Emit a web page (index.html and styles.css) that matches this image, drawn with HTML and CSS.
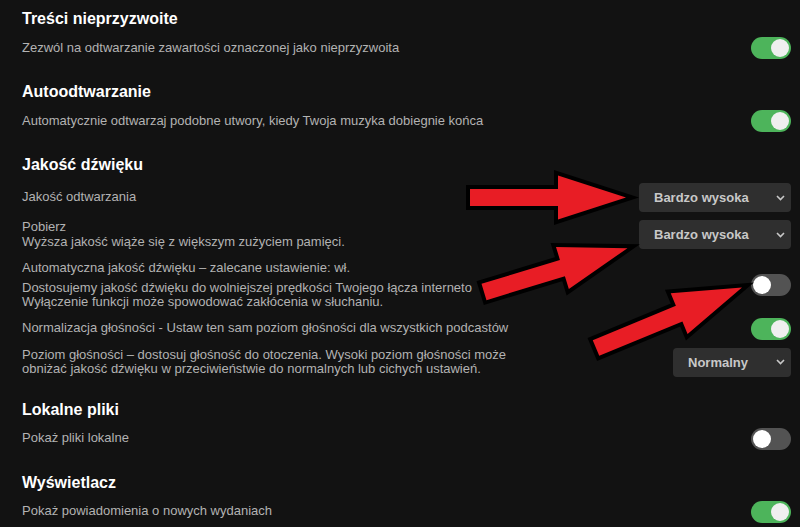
FILE: index.html
```html
<!DOCTYPE html>
<html lang="pl">
<head>
<meta charset="utf-8">
<link rel="stylesheet" href="styles.css">
</head>
<body>
<div class="page">
  <section class="section">
    <h2 class="heading">Treści nieprzyzwoite</h2>
    <div class="row">
      <div class="label">Zezwól na odtwarzanie zawartości oznaczonej jako nieprzyzwoita</div>
      <span class="toggle on"></span>
    </div>
  </section>

  <section class="section">
    <h2 class="heading">Autoodtwarzanie</h2>
    <div class="row">
      <div class="label">Automatycznie odtwarzaj podobne utwory, kiedy Twoja muzyka dobiegnie końca</div>
      <span class="toggle on"></span>
    </div>
  </section>

  <section class="section">
    <h2 class="heading">Jakość dźwięku</h2>
    <div class="row">
      <div class="label">Jakość odtwarzania</div>
      <div class="select wide"><span>Bardzo wysoka</span><svg class="chev" width="9" height="6" viewBox="0 0 9 6"><path d="M1 1l3.5 3.5L8 1" fill="none" stroke="#c8c8c8" stroke-width="1.6"/></svg></div>
    </div>
    <div class="row">
      <div class="label">Pobierz<br>Wyższa jakość wiąże się z większym zużyciem pamięci.</div>
      <div class="select wide"><span>Bardzo wysoka</span><svg class="chev" width="9" height="6" viewBox="0 0 9 6"><path d="M1 1l3.5 3.5L8 1" fill="none" stroke="#c8c8c8" stroke-width="1.6"/></svg></div>
    </div>
    <div class="row auto">
      <div class="label">
        <div>Automatyczna jakość dźwięku – zalecane ustawienie: wł.</div>
        <div class="desc">Dostosujemy jakość dźwięku do wolniejszej prędkości Twojego łącza interneto<br>Wyłączenie funkcji może spowodować zakłócenia w słuchaniu.</div>
      </div>
      <span class="toggle"></span>
    </div>
    <div class="row">
      <div class="label">Normalizacja głośności - Ustaw ten sam poziom głośności dla wszystkich podcastów</div>
      <span class="toggle on"></span>
    </div>
    <div class="row">
      <div class="label">Poziom głośności – dostosuj głośność do otoczenia. Wysoki poziom głośności może<br>obniżać jakość dźwięku w przeciwieństwie do normalnych lub cichych ustawień.</div>
      <div class="select narrow"><span>Normalny</span><svg class="chev" width="9" height="6" viewBox="0 0 9 6"><path d="M1 1l3.5 3.5L8 1" fill="none" stroke="#c8c8c8" stroke-width="1.6"/></svg></div>
    </div>
  </section>

  <section class="section">
    <h2 class="heading">Lokalne pliki</h2>
    <div class="row">
      <div class="label">Pokaż pliki lokalne</div>
      <span class="toggle"></span>
    </div>
  </section>

  <section class="section">
    <h2 class="heading">Wyświetlacz</h2>
    <div class="row">
      <div class="label">Pokaż powiadomienia o nowych wydaniach</div>
      <span class="toggle on"></span>
    </div>
  </section>

  <svg class="arrows" width="800" height="527" viewBox="0 0 800 527">
    <g class="arrow" transform="translate(470 197.5)">
      <polygon points="0,-8.5 88,-8.5 88,-22 156,0 88,22 88,8.5 0,8.5"/>
    </g>
    <g class="arrow" transform="translate(484 292) rotate(-17)">
      <polygon points="0,-8.5 82,-8.5 82,-22 150,0 82,22 82,8.5 0,8.5"/>
    </g>
    <g class="arrow" transform="translate(596 348) rotate(-22.5)">
      <polygon points="0,-8.5 90,-8.5 90,-22 158,0 90,22 90,8.5 0,8.5"/>
    </g>
  </svg>
</div>
</body>
</html>
```

FILE: styles.css
```css
* { box-sizing: border-box; }
html, body {
  margin: 0;
  padding: 0;
  background: #121212;
}
.page {
  position: relative;
  width: 800px;
  height: 527px;
  overflow: hidden;
  padding: 9px 9px 0 22px;
  font-family: "Liberation Sans", Arial, sans-serif;
  color: #b3b3b3;
}
.section {
  display: flex;
  flex-direction: column;
  gap: 8px;
  margin-bottom: 23px;
}
.heading {
  margin: 0;
  font-size: 16px;
  line-height: 20px;
  font-weight: 700;
  color: #ffffff;
}
.row {
  display: flex;
  align-items: center;
  justify-content: space-between;
  min-height: 22px;
}
.row.auto { margin-top: 4px; }
.label {
  font-size: 13px;
  line-height: 14.5px;
  color: #b3b3b3;
}
.desc { margin-top: 5px; }
.toggle {
  position: relative;
  flex: none;
  width: 40px;
  height: 22px;
  border-radius: 11px;
  background: #535353;
}
.toggle::after {
  content: "";
  position: absolute;
  top: 2px;
  left: 2px;
  width: 18px;
  height: 18px;
  border-radius: 50%;
  background: #ffffff;
}
.toggle.on { background: #4db45b; }
.toggle.on::after {
  left: 20px;
  background: #efefef;
}
.select {
  flex: none;
  display: flex;
  align-items: center;
  justify-content: space-between;
  height: 29px;
  padding: 0 6px 0 15px;
  border-radius: 4px;
  background: #2f2f2f;
  color: #c8c8c8;
  font-size: 13px;
  font-weight: 700;
}
.select.wide { width: 152px; }
.select.narrow { width: 118px; }
.arrows {
  position: absolute;
  left: 0;
  top: 0;
  pointer-events: none;
}
.arrow polygon {
  fill: #e81d25;
  stroke: #000000;
  stroke-width: 8;
  stroke-linejoin: miter;
  paint-order: stroke;
}
```
